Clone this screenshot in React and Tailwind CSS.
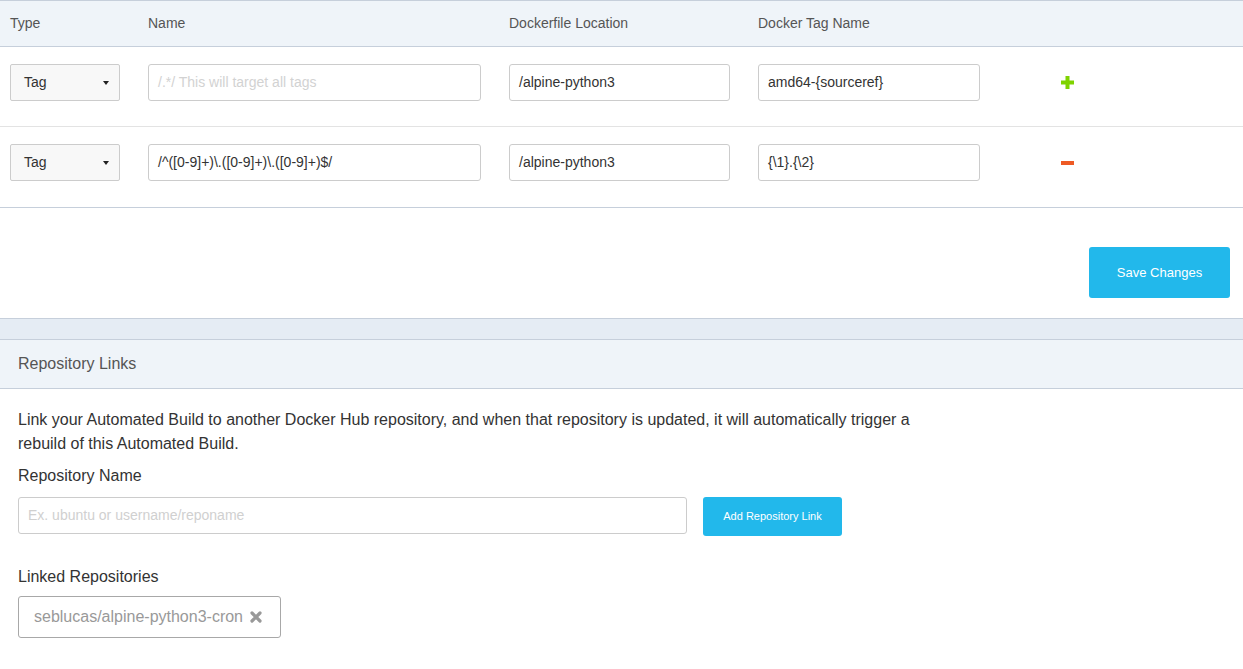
import React from "react";

const font = { fontFamily: '"Liberation Sans", Arial, sans-serif' };

function Select() {
  return (
    <div className="w-[110px] h-[37px] border border-[#cccccc] bg-[#f8f8f8] rounded-[2px] flex items-center justify-between pl-[13px] pr-[10px] text-[14px] text-[#333]">
      <span>Tag</span>
      <span className="w-0 h-0 border-l-[3px] border-r-[3px] border-t-[4px] border-l-transparent border-r-transparent border-t-[#222]"></span>
    </div>
  );
}

function Input({ w, value, placeholder }) {
  return (
    <div className={`${w} h-[37px] border border-[#cccccc] rounded-[3px] bg-white flex items-center pl-[9px] text-[14px]`}>
      {value ? (
        <span className="text-[#333]">{value}</span>
      ) : (
        <span className="text-[#d2d2d2]">{placeholder}</span>
      )}
    </div>
  );
}

function Row({ name, namePh, loc, tag, action, last }) {
  return (
    <div className={`flex items-start pl-[10px] pt-[17px] border-b ${last ? "h-[81px] border-[#c6cfdb]" : "h-[80px] border-[#e3e3e3]"}`}>
      <Select />
      <div className="ml-[28px]">
        <Input w="w-[333px]" value={name} placeholder={namePh} />
      </div>
      <div className="ml-[28px]">
        <Input w="w-[221px]" value={loc} />
      </div>
      <div className="ml-[28px]">
        <Input w="w-[222px]" value={tag} />
      </div>
      <div className="ml-[81px] h-[37px] flex items-center">{action}</div>
    </div>
  );
}

export default function App() {
  return (
    <div className="w-[1243px] min-h-[669px] bg-white" style={font}>
      <div className="border-t border-b border-[#c6cfdb] bg-[#eff4f9] h-[47px] flex items-center text-[14px] text-[#555]">
        <div className="pl-[10px] w-[148px]">Type</div>
        <div className="w-[361px]">Name</div>
        <div className="w-[249px]">Dockerfile Location</div>
        <div>Docker Tag Name</div>
      </div>

      <Row
        namePh="/.*/ This will target all tags"
        loc="/alpine-python3"
        tag="amd64-{sourceref}"
        action={
          <svg width="13" height="13" viewBox="0 0 13 13">
            <rect x="4.5" y="0" width="4" height="13" fill="#7fd300" />
            <rect x="0" y="4.5" width="13" height="4" fill="#7fd300" />
          </svg>
        }
      />
      <Row
        last
        name="/^([0-9]+)\.([0-9]+)\.([0-9]+)$/"
        loc="/alpine-python3"
        tag="{\1}.{\2}"
        action={
          <svg width="13" height="4" viewBox="0 0 13 4">
            <rect x="0" y="0" width="13" height="4" fill="#ee5a24" />
          </svg>
        }
      />

      <div className="h-[111px] flex justify-end items-start pt-[39px] pr-[13px] border-b border-[#c6cfdb]">
        <button className="w-[141px] h-[51px] bg-[#22b8eb] rounded-[3px] text-white text-[13px]">
          Save Changes
        </button>
      </div>

      <div className="h-[21px] bg-[#e5ecf4] border-b border-[#c6cfdb]"></div>

      <div className="h-[49px] bg-[#eff4f9] border-b border-[#c6cfdb] flex items-center pl-[18px] text-[16px] text-[#555]">
        Repository Links
      </div>

      <div className="pl-[18px] pt-[19px] text-[16px] text-[#333]">
        <p className="w-[900px] leading-[24px]">
          Link your Automated Build to another Docker Hub repository, and when that repository is updated, it will automatically trigger a rebuild of this Automated Build.
        </p>
        <div className="mt-[8px] leading-[24px]">Repository Name</div>
        <div className="mt-[9px] flex items-start">
          <div className="w-[669px] h-[37px] border border-[#cccccc] rounded-[3px] flex items-center pl-[9px] text-[14px] text-[#d0d0d0]">
            Ex. ubuntu or username/reponame
          </div>
          <button className="ml-[16px] w-[139px] h-[39px] bg-[#22b8eb] rounded-[3px] text-white text-[11px]">
            Add Repository Link
          </button>
        </div>
        <div className="mt-[29px] leading-[24px]">Linked Repositories</div>
        <div className="mt-[7px] w-[263px] h-[42px] border border-[#a8a8a8] rounded-[3px] flex items-center pl-[15px] text-[16px] text-[#999]">
          <span>seblucas/alpine-python3-cron</span>
          <svg className="ml-[7px]" width="12" height="12" viewBox="0 0 12 12">
            <path d="M2 2 L10 10 M10 2 L2 10" stroke="#999" strokeWidth="3.2" strokeLinecap="round" />
          </svg>
        </div>
      </div>
    </div>
  );
}
